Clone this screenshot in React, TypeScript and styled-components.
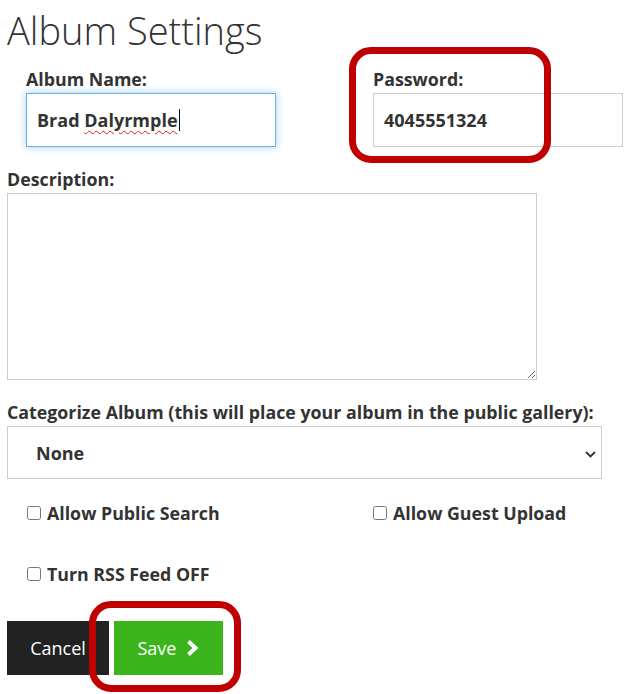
import React from 'react'
import styled, { createGlobalStyle } from 'styled-components'

const GlobalStyle = createGlobalStyle`
    body {
        margin: 0;
        background: #ffffff;
        font-family: 'Open Sans', 'Liberation Sans', sans-serif;
        color: #333333;
    }
`

const Page = styled.div`
    box-sizing: border-box;
    padding: 0 7px;
    width: 644px;
    min-height: 694px;
`

const Title = styled.h1`
    margin: 9px 0 0;
    font-size: 38px;
    line-height: 42px;
    font-weight: 300;
    color: #333333;
`

const TopRow = styled.div`
    display: grid;
    grid-template-columns: 347px 250px;
    padding-left: 19px;
    margin-top: 18px;
`

const Field = styled.div`
    position: relative;
`

const Label = styled.label`
    display: block;
    font-size: 17.8px;
    line-height: 20px;
    font-weight: 700;
    color: #333333;
    margin-bottom: 4px;
`

const TextBox = styled.div<{ $focused?: boolean }>`
    box-sizing: border-box;
    width: 250px;
    height: 54px;
    display: flex;
    align-items: center;
    padding: 0 10px;
    border: 1px solid ${p => (p.$focused ? '#66afe9' : '#cccccc')};
    box-shadow: ${p => (p.$focused ? '0 0 8px rgba(102, 175, 233, 0.6)' : 'none')};
    font-size: 18px;
    font-weight: 700;
    color: #333333;
    background: #ffffff;
`

const Misspelled = styled.span`
    text-decoration: underline wavy #e02020;
    text-decoration-thickness: 1px;
    text-underline-offset: 3px;
`

const Caret = styled.span`
    display: inline-block;
    width: 1px;
    height: 22px;
    background: #111111;
    margin-left: 1px;
`

const Block = styled.div<{ $top: number }>`
    margin-top: ${p => p.$top}px;
`

const TextArea = styled.textarea`
    box-sizing: border-box;
    display: block;
    width: 530px;
    height: 187px;
    border: 1px solid #cccccc;
    margin: 0;
    font-family: inherit;
`

const SelectWrap = styled.div`
    position: relative;
    width: 595px;
`

const Select = styled.select`
    box-sizing: border-box;
    width: 100%;
    height: 53px;
    appearance: none;
    border: 1px solid #cccccc;
    background: #ffffff;
    padding: 0 0 0 28px;
    font-family: inherit;
    font-size: 18px;
    font-weight: 700;
    color: #333333;
`

const SelectArrow = styled.svg`
    position: absolute;
    right: 6px;
    top: 25px;
    pointer-events: none;
`

const Options = styled.div`
    display: grid;
    grid-template-columns: 346px auto;
    row-gap: 37px;
    padding-left: 20px;
    margin-top: 22px;
`

const Option = styled.label`
    display: flex;
    align-items: center;
    gap: 6px;
    font-size: 17.8px;
    line-height: 24px;
    font-weight: 700;
    color: #333333;

    input {
        margin: 0;
        width: 14px;
        height: 14px;
    }
`

const Buttons = styled.div`
    position: relative;
    display: flex;
    gap: 5px;
    margin-top: 35px;
`

const Button = styled.button<{ $tone: 'dark' | 'green' }>`
    box-sizing: border-box;
    height: 54px;
    border: 0;
    display: flex;
    align-items: center;
    justify-content: center;
    gap: 9px;
    font-family: inherit;
    font-size: 18px;
    color: #ffffff;
    background: ${p => (p.$tone === 'dark' ? '#222222' : '#3cb41c')};
    width: ${p => (p.$tone === 'dark' ? '102px' : '109px')};
`

const Callout = styled.div<{ $left: number; $top: number; $w: number; $h: number }>`
    position: absolute;
    left: ${p => p.$left}px;
    top: ${p => p.$top}px;
    width: ${p => p.$w}px;
    height: ${p => p.$h}px;
    box-sizing: border-box;
    border: 7px solid #c00000;
    border-radius: 22px;
    pointer-events: none;
`

const App = () => {
    return (
        <Page>
            <GlobalStyle />
            <Title>Album Settings</Title>
            <TopRow>
                <Field>
                    <Label>Album Name:</Label>
                    <TextBox $focused>
                        Brad&nbsp;<Misspelled>Dalyrmple</Misspelled>
                        <Caret />
                    </TextBox>
                </Field>
                <Field>
                    <Label>Password:</Label>
                    <TextBox>4045551324</TextBox>
                    <Callout $left={-24} $top={-22} $w={202} $h={116} />
                </Field>
            </TopRow>
            <Block $top={22}>
                <Label>Description:</Label>
                <TextArea />
            </Block>
            <Block $top={22}>
                <Label>Categorize Album (this will place your album in the public gallery):</Label>
                <SelectWrap>
                    <Select defaultValue="none">
                        <option value="none">None</option>
                    </Select>
                    <SelectArrow width="11" height="7" viewBox="0 0 11 7">
                        <path d="M1 1l4.5 4.5L10 1" fill="none" stroke="#333" strokeWidth="1.8" />
                    </SelectArrow>
                </SelectWrap>
            </Block>
            <Options>
                <Option><input type="checkbox" /> Allow Public Search</Option>
                <Option><input type="checkbox" /> Allow Guest Upload</Option>
                <Option><input type="checkbox" /> Turn RSS Feed OFF</Option>
            </Options>
            <Buttons>
                <Button $tone="dark">Cancel</Button>
                <Button $tone="green">
                    Save
                    <svg width="14" height="18" viewBox="0 0 14 18">
                        <path d="M3.5 2.5l7 6.5-7 6.5" fill="none" stroke="#fff" strokeWidth="4" strokeLinejoin="miter" />
                    </svg>
                </Button>
                <Callout $left={82} $top={-20} $w={152} $h={91} />
            </Buttons>
        </Page>
    )
}

export default App
